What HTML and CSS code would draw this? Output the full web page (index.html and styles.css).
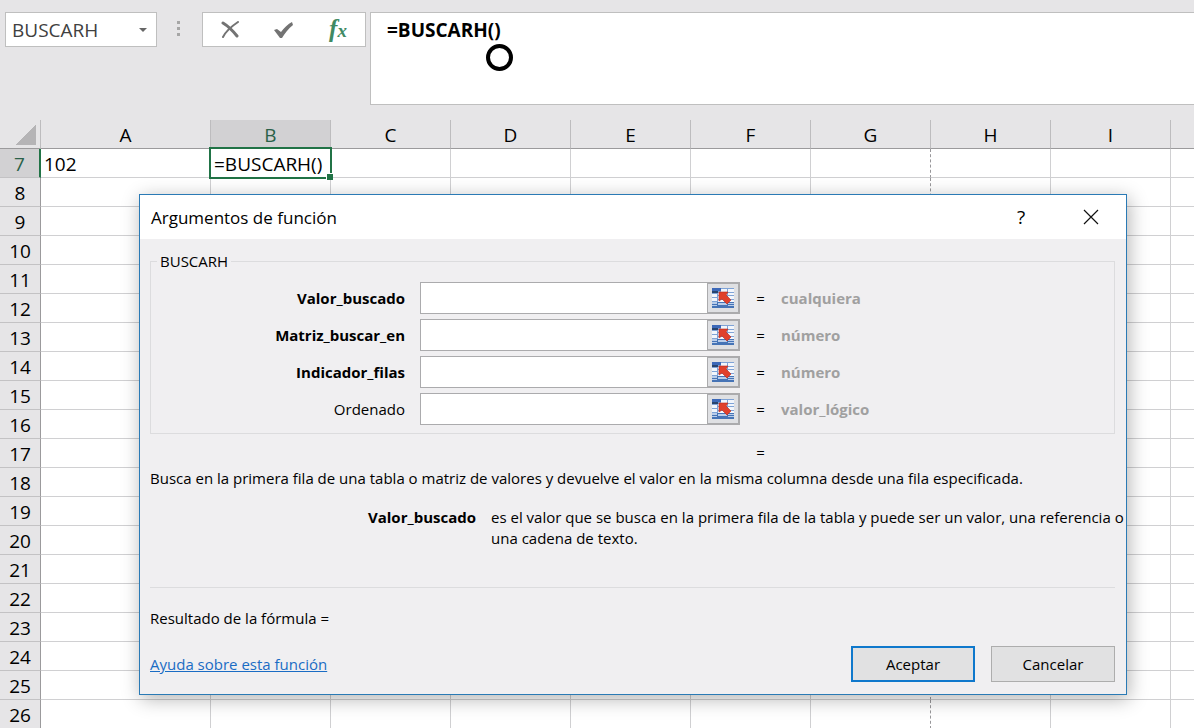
FILE: index.html
```html
<!DOCTYPE html>
<html lang="es">
<head>
    <meta charset="UTF-8">
    <meta name="viewport" content="width=device-width, initial-scale=1.0">
    <title>Argumentos de función</title>
    <link rel="stylesheet" href="styles.css">
</head>
<body>

<!-- Icon shared by the four range pickers -->
<svg class="defs" aria-hidden="true">
    <symbol id="rangeIcon" viewBox="0 0 22 20">
        <rect width="22" height="20" fill="#7fa3d6"/>
        <rect width="9" height="3" fill="#3c68b8"/>
        <rect y="3" width="6" height="2" fill="#27446f"/>
        <path d="M9 1h6v3H9zM16 1h6v3h-6zM6 5h9v2H6zM16 5h6v2h-6zM0 6h5v3H0zM6 8h9v3H6zM16 8h6v3h-6zM0 10h5v3H0zM6 12h9v2H6zM16 12h6v2h-6z" fill="#f2f6fc"/>
        <path d="M0 14h22v6H0z" fill="#4674b6"/>
        <path d="M0 14h5v2H0zM6 15h9v2H6zM16 15h6v1h-6zM0 17h5v1H0zM16 17h6v1h-6z" fill="#b9cdea"/>
        <path d="M7 4h9l-2 3 5 5-4 4-5-5-3 2z" fill="#e0402c" stroke="#b52a1c" stroke-width="0.6"/>
    </symbol>
</svg>

<!-- Formula bar -->
<header class="formula-bar">
    <button type="button" class="name-box">BUSCARH <span class="caret"></span></button>
    <div class="dots"><span></span><span></span><span></span></div>
    <div class="formula-actions">
        <button type="button" aria-label="Cancelar">
            <svg width="20" height="18" viewBox="0 0 20 18"><path d="M3 2c5 3 10 8 14 13" fill="none" stroke="#737373" stroke-width="3" stroke-linecap="round"/><path d="M18 1C12 5 6 10 3 16" fill="none" stroke="#737373" stroke-width="2" stroke-linecap="round"/></svg>
        </button>
        <button type="button" aria-label="Introducir">
            <svg width="20" height="18" viewBox="0 0 20 18"><path d="M0 9l3-1 4 3C10 7 14 3 18 1l1 3C14 8 11 12 8 17H6z" fill="#737373"/></svg>
        </button>
        <button type="button" class="fx" aria-label="Insertar función"><span class="fx-f">f</span><span class="fx-x">x</span></button>
    </div>
    <div class="formula">
        <textarea aria-label="Barra de fórmulas">=BUSCARH()</textarea>
        <span class="pointer"></span>
    </div>
</header>

<!-- Worksheet -->
<main class="sheet">
    <table>
        <colgroup>
            <col class="col-head"><col class="col-a">
            <col class="col"><col class="col"><col class="col"><col class="col">
            <col class="col"><col class="col"><col class="col"><col class="col">
            <col>
        </colgroup>
        <thead>
            <tr><th class="corner"></th><th>A</th><th class="active">B</th><th>C</th><th>D</th><th>E</th><th>F</th><th>G</th><th>H</th><th>I</th><th></th></tr>
        </thead>
        <tbody>
            <tr><th class="active">7</th><td>102</td><td class="selected">=BUSCARH()</td><td></td><td></td><td></td><td></td><td></td><td></td><td></td><td></td></tr>
            <tr><th>8</th><td></td><td></td><td></td><td></td><td></td><td></td><td></td><td></td><td></td><td></td></tr>
            <tr><th>9</th><td></td><td></td><td></td><td></td><td></td><td></td><td></td><td></td><td></td><td></td></tr>
            <tr><th>10</th><td></td><td></td><td></td><td></td><td></td><td></td><td></td><td></td><td></td><td></td></tr>
            <tr><th>11</th><td></td><td></td><td></td><td></td><td></td><td></td><td></td><td></td><td></td><td></td></tr>
            <tr><th>12</th><td></td><td></td><td></td><td></td><td></td><td></td><td></td><td></td><td></td><td></td></tr>
            <tr><th>13</th><td></td><td></td><td></td><td></td><td></td><td></td><td></td><td></td><td></td><td></td></tr>
            <tr><th>14</th><td></td><td></td><td></td><td></td><td></td><td></td><td></td><td></td><td></td><td></td></tr>
            <tr><th>15</th><td></td><td></td><td></td><td></td><td></td><td></td><td></td><td></td><td></td><td></td></tr>
            <tr><th>16</th><td></td><td></td><td></td><td></td><td></td><td></td><td></td><td></td><td></td><td></td></tr>
            <tr><th>17</th><td></td><td></td><td></td><td></td><td></td><td></td><td></td><td></td><td></td><td></td></tr>
            <tr><th>18</th><td></td><td></td><td></td><td></td><td></td><td></td><td></td><td></td><td></td><td></td></tr>
            <tr><th>19</th><td></td><td></td><td></td><td></td><td></td><td></td><td></td><td></td><td></td><td></td></tr>
            <tr><th>20</th><td></td><td></td><td></td><td></td><td></td><td></td><td></td><td></td><td></td><td></td></tr>
            <tr><th>21</th><td></td><td></td><td></td><td></td><td></td><td></td><td></td><td></td><td></td><td></td></tr>
            <tr><th>22</th><td></td><td></td><td></td><td></td><td></td><td></td><td></td><td></td><td></td><td></td></tr>
            <tr><th>23</th><td></td><td></td><td></td><td></td><td></td><td></td><td></td><td></td><td></td><td></td></tr>
            <tr><th>24</th><td></td><td></td><td></td><td></td><td></td><td></td><td></td><td></td><td></td><td></td></tr>
            <tr><th>25</th><td></td><td></td><td></td><td></td><td></td><td></td><td></td><td></td><td></td><td></td></tr>
            <tr><th>26</th><td></td><td></td><td></td><td></td><td></td><td></td><td></td><td></td><td></td><td></td></tr>
        </tbody>
    </table>
</main>

<!-- Function arguments dialog -->
<form class="dialog" role="dialog" aria-labelledby="dialogTitle">
    <div class="title-bar">
        <h1 id="dialogTitle">Argumentos de función</h1>
        <button type="button" aria-label="Ayuda">?</button>
        <button type="button" aria-label="Cerrar">
            <svg width="16" height="16" viewBox="0 0 16 16"><path d="M1 1l14 14M15 1L1 15" stroke="#111" stroke-width="1.2"/></svg>
        </button>
    </div>
    <div class="dialog-body">
        <fieldset>
            <legend>BUSCARH</legend>
            <div class="argument required">
                <label for="valorBuscado">Valor_buscado</label>
                <div class="picker">
                    <input type="text" id="valorBuscado">
                    <button type="button" aria-label="Seleccionar rango"><svg><use href="#rangeIcon"/></svg></button>
                </div>
                <span class="equals">=</span>
                <span class="type">cualquiera</span>
            </div>
            <div class="argument required">
                <label for="matrizBuscarEn">Matriz_buscar_en</label>
                <div class="picker">
                    <input type="text" id="matrizBuscarEn">
                    <button type="button" aria-label="Seleccionar rango"><svg><use href="#rangeIcon"/></svg></button>
                </div>
                <span class="equals">=</span>
                <span class="type">número</span>
            </div>
            <div class="argument required">
                <label for="indicadorFilas">Indicador_filas</label>
                <div class="picker">
                    <input type="text" id="indicadorFilas">
                    <button type="button" aria-label="Seleccionar rango"><svg><use href="#rangeIcon"/></svg></button>
                </div>
                <span class="equals">=</span>
                <span class="type">número</span>
            </div>
            <div class="argument">
                <label for="ordenado">Ordenado</label>
                <div class="picker">
                    <input type="text" id="ordenado">
                    <button type="button" aria-label="Seleccionar rango"><svg><use href="#rangeIcon"/></svg></button>
                </div>
                <span class="equals">=</span>
                <span class="type">valor_lógico</span>
            </div>
        </fieldset>
        <div class="result-row"><span class="equals">=</span></div>
        <p class="description">Busca en la primera fila de una tabla o matriz de valores y devuelve el valor en la misma columna desde una fila especificada.</p>
        <dl class="argument-help">
            <dt>Valor_buscado</dt>
            <dd>es el valor que se busca en la primera fila de la tabla y puede ser un valor, una referencia o una cadena de texto.</dd>
        </dl>
        <p class="formula-result">Resultado de la fórmula =</p>
        <div class="dialog-footer">
            <a href="#">Ayuda sobre esta función</a>
            <button type="submit" class="primary">Aceptar</button>
            <button type="button">Cancelar</button>
        </div>
    </div>
</form>

</body>
</html>
```
FILE: styles.css
```css
* {
    box-sizing: border-box;
}

body {
    margin: 0;
    height: 100vh;
    display: flex;
    flex-direction: column;
    overflow: hidden;
    background-color: #e6e5e7;
    color: #000;
    font-family: "Open Sans", "Noto Sans", sans-serif;
    font-size: 15px;
}

button,
input,
textarea {
    font: inherit;
    color: inherit;
    margin: 0;
}

.defs {
    display: none;
}

/* Formula bar */
.formula-bar {
    display: flex;
    align-items: flex-start;
    flex: none;
    padding: 12px 0 15px 5px;
}

.name-box,
.formula-actions {
    height: 35px;
    background-color: #fff;
    border: 1px solid #bfbfbf;
}

.name-box {
    display: flex;
    align-items: center;
    justify-content: space-between;
    width: 152px;
    padding: 0 9px 0 6px;
    color: #404040;
    font-size: 19px;
}

.caret {
    border: 4px solid transparent;
    border-top-color: #666;
    border-bottom: 0;
}

.dots {
    display: flex;
    flex-direction: column;
    gap: 3px;
    margin: 9px 22px 0 20px;
}

.dots span {
    width: 3px;
    height: 3px;
    background-color: #a6a6a6;
}

.formula-actions {
    display: flex;
    width: 164px;
    margin-right: 4px;
}

.formula-actions button {
    flex: 1;
    display: flex;
    align-items: center;
    justify-content: center;
    padding: 0;
    border: none;
    background: none;
}

.formula-actions .fx {
    align-items: baseline;
    color: #3f8a64;
    font-family: "Liberation Serif", serif;
    font-style: italic;
    font-weight: bold;
    line-height: 32px;
}

.fx-f {
    font-size: 25px;
}

.fx-x {
    font-size: 19px;
}

.formula {
    position: relative;
    flex: 1;
    height: 93px;
}

.formula textarea {
    display: block;
    width: 100%;
    height: 100%;
    padding: 4px 16px;
    border: 1px solid #bfbfbf;
    border-right: none;
    resize: none;
    background-color: #fff;
    font-size: 19px;
    font-weight: bold;
    line-height: 26px;
}

.pointer {
    position: absolute;
    left: 116px;
    top: 32px;
    width: 27px;
    height: 27px;
    border: 4px solid #000;
    border-radius: 50%;
}

/* Worksheet */
.sheet {
    flex: 1;
    min-height: 0;
    overflow: hidden;
}

.sheet table {
    width: 100%;
    table-layout: fixed;
    border-collapse: separate;
    border-spacing: 0;
    font-size: 19px;
    line-height: 26px;
}

.col-head {
    width: 41px;
}

.col-a {
    width: 170px;
}

.col {
    width: 120px;
}

.sheet th,
.sheet td {
    height: 29px;
    padding: 2px 0 0;
    border-right: 1px solid #d0d0d2;
    border-bottom: 1px solid #d0d0d2;
    white-space: nowrap;
}

.sheet th {
    font-weight: normal;
    text-align: center;
}

.sheet thead th {
    border-right-color: #bdbcbe;
    border-bottom-color: #9b9a9c;
}

.sheet tbody th {
    border-right-color: #9b9a9c;
    border-bottom-color: #c3c2c4;
}

.sheet td {
    background-color: #fff;
    padding-left: 3px;
}

.sheet tr > :last-child {
    border-right: none;
}

/* Page break between G and H */
.sheet td:nth-child(8) {
    border-right: 1px dashed #98979a;
}

.sheet th.active {
    background-color: #d2d1d3;
    color: #2a6149;
}

.sheet tbody th.active {
    border-right: 2px solid #217346;
}

.sheet .corner {
    background: linear-gradient(135deg, transparent 50%, #b5b4b6 50%) 16px 5px / 20px 20px no-repeat;
}

.sheet .selected {
    position: relative;
}

.selected::before {
    content: "";
    position: absolute;
    inset: -2px;
    border: 2px solid #217346;
}

.selected::after {
    content: "";
    position: absolute;
    right: -3px;
    bottom: -3px;
    width: 6px;
    height: 6px;
    background-color: #217346;
    border-top: 1px solid #fff;
    border-left: 1px solid #fff;
}

/* Dialog */
.dialog {
    position: absolute;
    top: 194px;
    left: 139px;
    right: 67px;
    background-color: #f0eff1;
    border: 1px solid #2a7ab5;
    box-shadow: 2px 4px 18px rgba(0, 0, 0, 0.3);
}

.title-bar {
    display: flex;
    height: 44px;
    background-color: #fff;
    align-items: center;
}

.title-bar h1 {
    flex: 1;
    margin: 0;
    padding-left: 11px;
    font-size: 17px;
    font-weight: normal;
}

.title-bar button {
    width: 70px;
    height: 44px;
    padding: 0;
    border: none;
    background: none;
    font-size: 19px;
}

.title-bar svg {
    display: block;
    margin: 0 auto;
}

.dialog-body {
    padding: 12px 11px 12px 10px;
}

fieldset {
    margin: 0;
    padding: 11px 0 8px;
    border: 1px solid #dcdcde;
}

legend {
    margin-left: 6px;
    padding: 0 3px;
    line-height: 20px;
}

.argument {
    display: grid;
    grid-template-columns: 254px 335px 41px 1fr;
    align-items: center;
    margin-bottom: 5px;
}

.argument:last-child {
    margin-bottom: 0;
}

.argument label {
    text-align: right;
}

.required label {
    font-weight: bold;
}

.picker {
    display: flex;
    height: 32px;
    margin-left: 15px;
}

.picker input {
    flex: 1;
    min-width: 0;
    padding: 0 6px;
    border: 1px solid #ababad;
    border-right: none;
    background-color: #fff;
}

.picker button {
    width: 33px;
    padding: 0;
    border: 2px solid #ababad;
    border-left-width: 1px;
    background-color: #dfe0e3;
}

.picker svg {
    display: block;
    width: 22px;
    height: 20px;
    margin: 0 auto;
}

.equals {
    text-align: center;
}

.type {
    color: #a0a0a0;
    font-weight: bold;
}

.result-row {
    display: grid;
    grid-template-columns: 41px;
    margin-top: 8px;
    padding-left: 590px;
    line-height: 20px;
}

.description {
    margin: 6px 0 18px;
    line-height: 21px;
}

.argument-help {
    display: grid;
    grid-template-columns: 326px 1fr;
    column-gap: 15px;
    margin: 0;
    padding-bottom: 38px;
    border-bottom: 1px solid #dcdcde;
    line-height: 21px;
}

.argument-help dt {
    font-weight: bold;
    text-align: right;
}

.argument-help dd {
    margin: 0 -11px 0 0;
}

.formula-result {
    margin: 20px 0 18px;
    line-height: 20px;
}

.dialog-footer {
    display: flex;
    align-items: center;
    gap: 16px;
}

.dialog-footer a {
    margin-right: auto;
    color: #1a6cc4;
}

.dialog-footer button {
    width: 124px;
    height: 36px;
    border: 1px solid #adadad;
    background-color: #e1e1e2;
}

.dialog-footer .primary {
    border: 2px solid #0f78cc;
}
```
